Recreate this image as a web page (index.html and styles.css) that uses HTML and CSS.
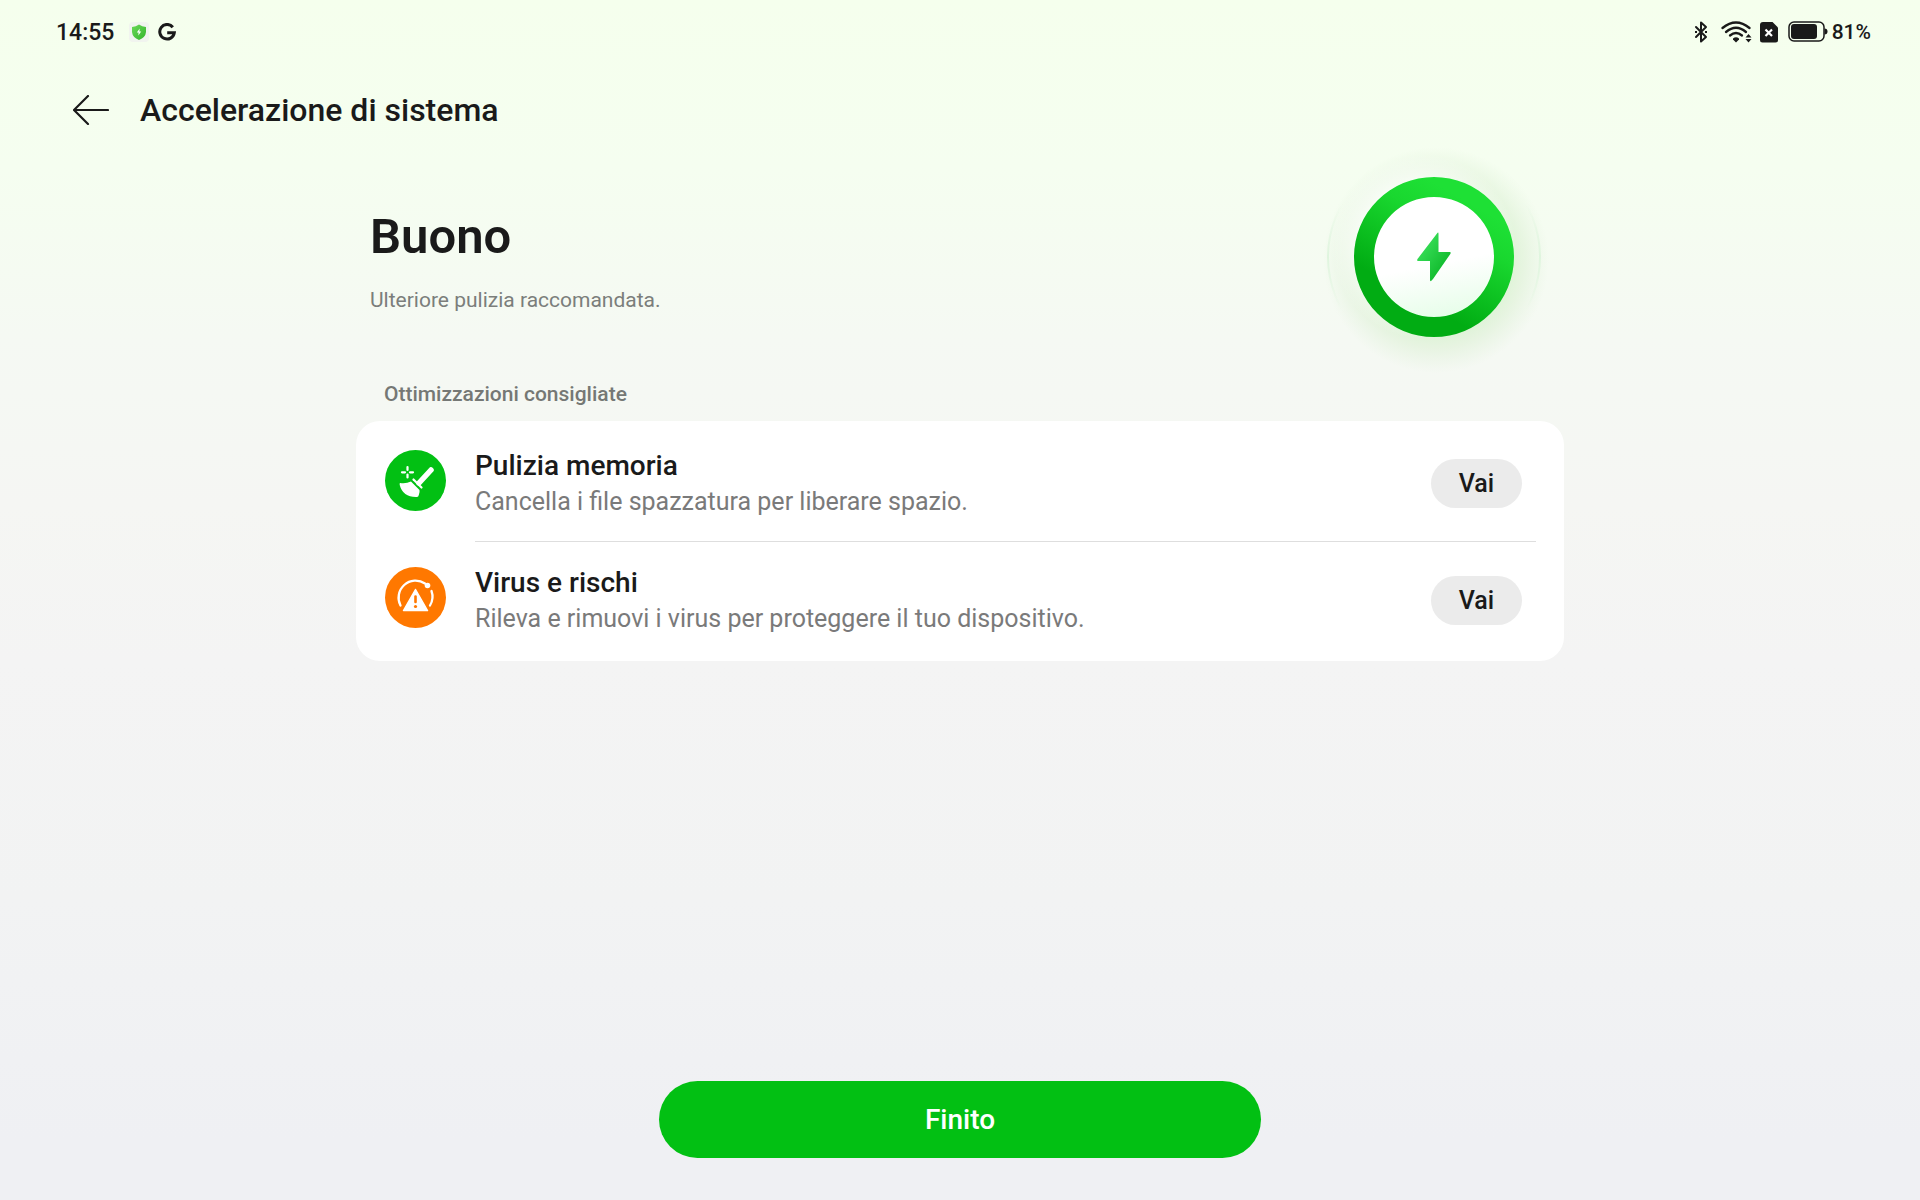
FILE: index.html
```html
<!DOCTYPE html>
<html lang="it">
<head>
<meta charset="utf-8">
<meta name="viewport" content="width=device-width, initial-scale=1">
<title>Accelerazione di sistema</title>
<link rel="stylesheet" href="styles.css">
</head>
<body>
<div class="status">
  <div class="status-group">
    <time class="clock">14:55</time>
    <svg class="icon-shield" width="20" height="20" viewBox="0 0 20 20" aria-hidden="true">
      <defs><linearGradient id="shield" x1="0" y1="0" x2="1" y2="1"><stop offset="0" stop-color="#6ad858"/><stop offset="1" stop-color="#35b52c"/></linearGradient></defs>
      <rect width="20" height="20" rx="4" fill="#f1f4ef"/>
      <path d="M10 2.500Q13 4.800 17 5V10Q16.500 15.500 10 18Q3.500 15.500 3 10V5Q7 4.800 10 2.500Z" fill="url(#shield)"/>
      <path d="M10.700 6.500 7.800 10.600H9.600L9.300 13.500 12.200 9.400H10.400Z" fill="#fff"/>
    </svg>
    <svg width="18" height="18" viewBox="0 0 18 18" aria-hidden="true"><path d="M14.800 4.200A7.300 7.300 0 1 0 16.300 9.800H9.200" fill="none" stroke="#1a1a1a" stroke-width="3"/></svg>
  </div>
  <div class="status-group status-right">
    <svg class="icon-bt" width="14" height="22" viewBox="0 0 14 22" aria-hidden="true"><path d="M2 6 12 16 7 20.500V1.500L12 6 2 16" fill="none" stroke="#1a1a1a" stroke-width="2" stroke-linejoin="round" stroke-linecap="round"/><path d="M1 11h2M11 11h2" stroke="#1a1a1a" stroke-width="2"/></svg>
    <svg class="icon-wifi" width="31" height="22" viewBox="0 0 31 22" aria-hidden="true"><g fill="none" stroke="#1a1a1a" stroke-width="2.300" stroke-linecap="round"><path d="M1.500 7Q15 -4 28.500 7"/><path d="M5 11Q15 2.500 25 11"/><path d="M9 14.500Q15 9.500 21 14.500"/></g><path d="M12 17.500Q15 15 18 17.500V18.500L15 21.500 12 18.500Z" fill="#1a1a1a"/><path d="M24.500 16.500 27.500 13 30.500 16.500ZM24.500 18 27.500 21.500 30.500 18Z" fill="#1a1a1a"/></svg>
    <svg class="icon-sim" width="18" height="22" viewBox="0 0 18 22" aria-hidden="true"><path d="M3 1H12.500L18 6.500V19Q18 21.500 15.500 21.500H2.500Q0 21.500 0 19V4Q0 1 3 1Z" fill="#1a1a1a"/><path d="M5.500 8.500 12 15M12 8.500 5.500 15" stroke="#fff" stroke-width="2.200"/></svg>
    <svg class="icon-battery" width="40" height="22" viewBox="0 0 40 22" aria-hidden="true"><rect x="1" y="1" width="35" height="19" rx="5" fill="none" stroke="#1a1a1a" stroke-width="1.500"/><rect x="3" y="3" width="26" height="15" rx="3" fill="#1a1a1a"/><path d="M36.500 7.500Q39.500 7.500 39.500 10.500T36.500 13.500Z" fill="#1a1a1a"/></svg>
    <span class="battery-level">81%</span>
  </div>
</div>
<header class="topbar">
  <button class="back" type="button" aria-label="Indietro">
    <svg width="36" height="30" viewBox="0 0 36 30" aria-hidden="true"><path d="M35 15H1M15 1 1 15 15 29" fill="none" stroke="#1a1a1a" stroke-width="2.200" stroke-linecap="round" stroke-linejoin="round"/></svg>
  </button>
  <h1 class="title">Accelerazione di sistema</h1>
</header>
<main class="content">
  <section class="summary">
    <div>
      <h2 class="state">Buono</h2>
      <p class="hint">Ulteriore pulizia raccomandata.</p>
    </div>
    <svg class="gauge" width="260" height="260" viewBox="0 0 260 260" aria-hidden="true">
      <defs>
        <linearGradient id="ring" x1="0.700" y1="0.150" x2="0.300" y2="0.850"><stop offset="0" stop-color="#1ee035"/><stop offset="0.250" stop-color="#19d72f"/><stop offset="0.850" stop-color="#01ac13"/></linearGradient>
        <linearGradient id="disc" x1="0.400" y1="0" x2="0.600" y2="1"><stop offset="0.550" stop-color="#fff"/><stop offset="1" stop-color="#e2fde5"/></linearGradient>
        <linearGradient id="bolt" x1="0" y1="0" x2="1" y2="1"><stop offset="0.200" stop-color="#38de58"/><stop offset="0.800" stop-color="#0fb92b"/></linearGradient>
        <radialGradient id="glow"><stop offset="0.600" stop-color="#cdf0c3" stop-opacity="0.700"/><stop offset="0.780" stop-color="#d9efd0" stop-opacity="0.500"/><stop offset="1" stop-color="#dcefd6" stop-opacity="0"/></radialGradient>
        <radialGradient id="shine"><stop offset="0.650" stop-color="#fff" stop-opacity="0.900"/><stop offset="1" stop-color="#fff" stop-opacity="0"/></radialGradient>
        <linearGradient id="rim" x1="0" y1="0" x2="0" y2="1"><stop offset="0.250" stop-color="#dff5de" stop-opacity="0"/><stop offset="0.500" stop-color="#dff5de"/><stop offset="0.750" stop-color="#dff5de" stop-opacity="0"/></linearGradient>
      </defs>
      <circle cx="132" cy="133" r="113" fill="url(#glow)"/>
      <circle cx="120" cy="120" r="92" fill="url(#shine)"/>
      <circle cx="130" cy="130" r="106" fill="none" stroke="url(#rim)" stroke-width="2"/>
      <circle cx="130" cy="130" r="70" fill="url(#disc)"/>
      <path fill-rule="evenodd" d="M130 50a80 80 0 1 0 0 160a80 80 0 1 0 0-160ZM130 70a60 60 0 1 1 0 120a60 60 0 1 1 0-120Z" fill="url(#ring)"/>
      <path d="M133 106.500Q134.500 104.500 134.500 107V125H145.500Q147.500 125 146.300 127L129 152Q126 156 126 152.500V134H114Q112.500 134 113.500 132Z" fill="url(#bolt)"/>
    </svg>
  </section>
  <h3 class="section-title">Ottimizzazioni consigliate</h3>
  <ul class="card">
    <li class="row">
      <svg class="row-icon" width="61" height="61" viewBox="0 0 61 61" aria-hidden="true">
        <circle cx="30.500" cy="30.500" r="30.500" fill="#02c013"/>
        <path d="M46 20 34 33" stroke="#fff" stroke-width="5.500" stroke-linecap="round"/>
        <path d="M28.500 29.500 36.500 37.500" stroke="#fff" stroke-width="2.200" stroke-linecap="round"/>
        <path d="M26 31.500Q21 34 15 33Q14.500 33 14.700 35Q18 47.500 32 47Q33.500 46.800 33.800 45Q35 42 34.500 40Z" fill="#fff"/>
        <path d="M22.500 17v3M22.500 24.500V27.500M17 22.300h3M25 22.300h3" stroke="#fff" stroke-width="2.200" stroke-linecap="round"/>
      </svg>
      <div class="row-body">
        <div class="row-text">
          <h4 class="row-title">Pulizia memoria</h4>
          <p class="row-desc">Cancella i file spazzatura per liberare spazio.</p>
        </div>
        <button class="go" type="button">Vai</button>
      </div>
    </li>
    <li class="row">
      <svg class="row-icon" width="61" height="61" viewBox="0 0 61 61" aria-hidden="true">
        <circle cx="30.500" cy="30.500" r="30.500" fill="#ff7800"/>
        <path d="M15.500 38.500A17 17 0 0 1 40 16.500M46.500 24A17 17 0 0 1 45 38.500" fill="none" stroke="#fff" stroke-width="2.300" stroke-linecap="round"/>
        <circle cx="42.500" cy="18.500" r="2.800" fill="#fff"/>
        <path d="M30.500 22.500 42.500 43.500H18.500Z" fill="#fff" stroke="#fff" stroke-width="1.500" stroke-linejoin="round"/>
        <path d="M30.500 29.500V35" stroke="#ff7800" stroke-width="2.600" stroke-linecap="round"/><circle cx="30.500" cy="39.500" r="1.600" fill="#ff7800"/>
      </svg>
      <div class="row-body">
        <div class="row-text">
          <h4 class="row-title">Virus e rischi</h4>
          <p class="row-desc">Rileva e rimuovi i virus per proteggere il tuo dispositivo.</p>
        </div>
        <button class="go" type="button">Vai</button>
      </div>
    </li>
  </ul>
</main>
<footer class="actions"><button class="done" type="button">Finito</button></footer>
</body>
</html>
```
FILE: styles.css
```css
* { box-sizing: border-box; }
body {
  margin: 0;
  min-height: 100vh;
  display: flex;
  flex-direction: column;
  font-family: Roboto, "Liberation Sans", sans-serif;
  color: #1a1a1a;
  background: linear-gradient(#f5ffed 0%, #f5fef0 14%, #f5f9f3 28%, #f5f6f3 42%, #f4f4f4 55%, #f2f3f3 75%, #eff0f3 95%, #eff0f3 100%);
}
h1, h2, h3, h4, p, ul { margin: 0; padding: 0; font-weight: 400; }
button { border: 0; padding: 0; font: inherit; color: inherit; background: none; cursor: pointer; }
svg { display: block; flex: none; }

.status {
  display: flex;
  justify-content: space-between;
  align-items: center;
  height: 64px;
  padding: 0 49px 0 56px;
}
.status-group { display: flex; align-items: center; font-weight: 500; }
.clock { font-size: 23px; }
.icon-shield { margin: 0 9px 0 15px; }
.icon-wifi { margin-left: 13px; }
.icon-sim { margin-left: 8px; }
.icon-battery { margin: 0 4px 0 10px; }
.battery-level { font-size: 21px; }

.topbar {
  display: flex;
  align-items: center;
  gap: 31px;
  height: 92px;
  padding: 0 73px;
}
.title { font-size: 32px; line-height: 40px; font-weight: 500; }

.content { width: 100%; max-width: 1208px; margin: 0 auto; flex: 1; }
.summary {
  display: flex;
  justify-content: space-between;
  padding: 0 0 0 14px;
  height: 220px;
}
.state { margin-top: 49px; font-size: 49px; line-height: 64px; font-weight: 600; }
.hint { margin-top: 17px; font-size: 21px; line-height: 28px; color: #7b7e7b; }
.gauge { margin-top: -29px; }
.section-title { padding: 4px 28px 13px; font-size: 21px; line-height: 28px; font-weight: 500; color: #757875; }

.card { list-style: none; padding: 4px 28px 2px 29px; border-radius: 24px; background: #fff; }
.row { display: flex; gap: 29px; }
.row-icon { margin-top: 25px; }
.row-body {
  flex: 1;
  display: flex;
  justify-content: space-between;
  align-items: center;
  height: 117px;
  padding-right: 14px;
  border-bottom: 1px solid #dedede;
}
.row:last-child .row-body { border-color: transparent; }
.row-text { padding-top: 2px; }
.row-title { font-size: 28px; line-height: 36px; font-weight: 500; }
.row-desc { font-size: 25px; line-height: 36px; color: #7a7a7a; }
.go { width: 91px; height: 49px; border-radius: 25px; background: #ebebeb; font-size: 25px; font-weight: 500; }

.actions { display: flex; justify-content: center; padding: 0 24px 42px; }
.done { width: 100%; max-width: 602px; height: 77px; border-radius: 39px; background: #02c013; color: #fff; font-size: 28px; font-weight: 500; }
```
